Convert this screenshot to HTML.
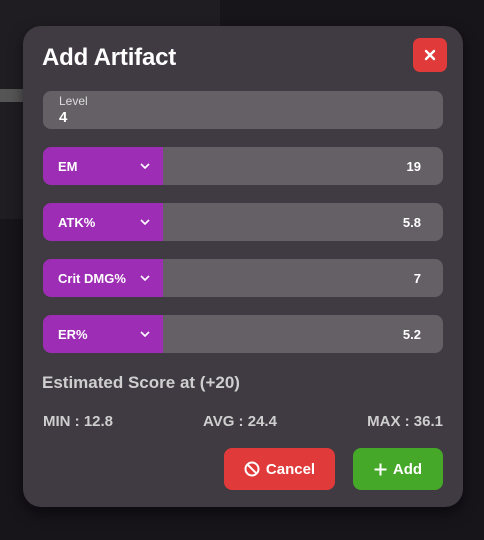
<!DOCTYPE html>
<html><head><style>
*{box-sizing:border-box;margin:0;padding:0}
body{width:484px;height:540px;background:#17141a;position:relative;overflow:hidden;font-family:"Liberation Sans",sans-serif;color:#fff}
.bgp{position:absolute;left:0;top:0;width:220px;height:219px;background:#1f1d21}
.line{position:absolute;left:0;top:89px;width:24px;height:13px;background:#555}
.modal{position:absolute;left:23px;top:26px;width:440px;height:481px;background:#403a42;border-radius:18px;box-shadow:0 6px 14px rgba(0,0,0,.5)}
h1{position:absolute;left:19px;top:18px;font-size:24px;font-weight:bold;letter-spacing:-0.2px}
.close{position:absolute;left:390px;top:12px;width:34px;height:34px;background:#e03a3a;border-radius:7px}
.field{position:absolute;left:20px;width:400px;height:38px;background:#655f66;border-radius:8px}
.lvl .lab{position:absolute;left:16px;top:3px;font-size:12px;color:#ddd}
.lvl .v{position:absolute;left:16px;top:18px;font-size:15px;font-weight:bold}
.sel{position:absolute;left:0;top:0;width:120px;height:38px;background:#9e2db5;border-radius:8px 0 0 8px}
.sel span{position:absolute;left:15px;top:12px;font-size:13px;font-weight:bold}
.sel svg{position:absolute;left:97px;top:16px}
.val{position:absolute;right:22px;top:12px;font-size:13px;font-weight:bold}
.est{position:absolute;left:19px;top:347px;font-size:17px;font-weight:bold;color:#cfcfcf}
.st{position:absolute;top:387px;font-size:15px;font-weight:bold;color:#cfcfcf}
.btn{position:absolute;top:422px;height:42px;border-radius:8px;font-size:15px;font-weight:bold;display:flex;align-items:center;justify-content:center;gap:6px}
</style></head><body>
<div class="bgp"></div><div class="line"></div>
<div class="modal">
<h1>Add Artifact</h1>
<div class="close"><svg width="34" height="34" viewBox="0 0 34 34"><path d="M13 13L21 21M21 13L13 21" stroke="#fff" stroke-width="2.4" stroke-linecap="round"/></svg></div>
<div class="field lvl" style="top:65px"><div class="lab">Level</div><div class="v">4</div></div>
<div class="field" style="top:121px"><div class="sel"><span>EM</span><svg width="10" height="6"><path d="M1 1L5 5L9 1" stroke="#fff" stroke-width="1.6" fill="none"/></svg></div><div class="val">19</div></div>
<div class="field" style="top:177px"><div class="sel"><span>ATK%</span><svg width="10" height="6"><path d="M1 1L5 5L9 1" stroke="#fff" stroke-width="1.6" fill="none"/></svg></div><div class="val">5.8</div></div>
<div class="field" style="top:233px"><div class="sel"><span>Crit DMG%</span><svg width="10" height="6"><path d="M1 1L5 5L9 1" stroke="#fff" stroke-width="1.6" fill="none"/></svg></div><div class="val">7</div></div>
<div class="field" style="top:289px"><div class="sel"><span>ER%</span><svg width="10" height="6"><path d="M1 1L5 5L9 1" stroke="#fff" stroke-width="1.6" fill="none"/></svg></div><div class="val">5.2</div></div>
<div class="est">Estimated Score at (+20)</div>
<div class="st" style="left:20px">MIN : 12.8</div>
<div class="st" style="left:180px">AVG : 24.4</div>
<div class="st" style="right:20px">MAX : 36.1</div>
<div class="btn" style="left:201px;width:111px;background:#e03a3a"><svg width="16" height="16" viewBox="0 0 16 16"><circle cx="8" cy="8" r="6.5" stroke="#fff" stroke-width="2" fill="none"/><path d="M3.5 3.5L12.5 12.5" stroke="#fff" stroke-width="2"/></svg>Cancel</div>
<div class="btn" style="left:330px;width:90px;background:#45a829"><svg width="13" height="13" viewBox="0 0 13 13"><path d="M6.5 0.5V12.5M0.5 6.5H12.5" stroke="#fff" stroke-width="2"/></svg>Add</div>
</div>
</body></html>
